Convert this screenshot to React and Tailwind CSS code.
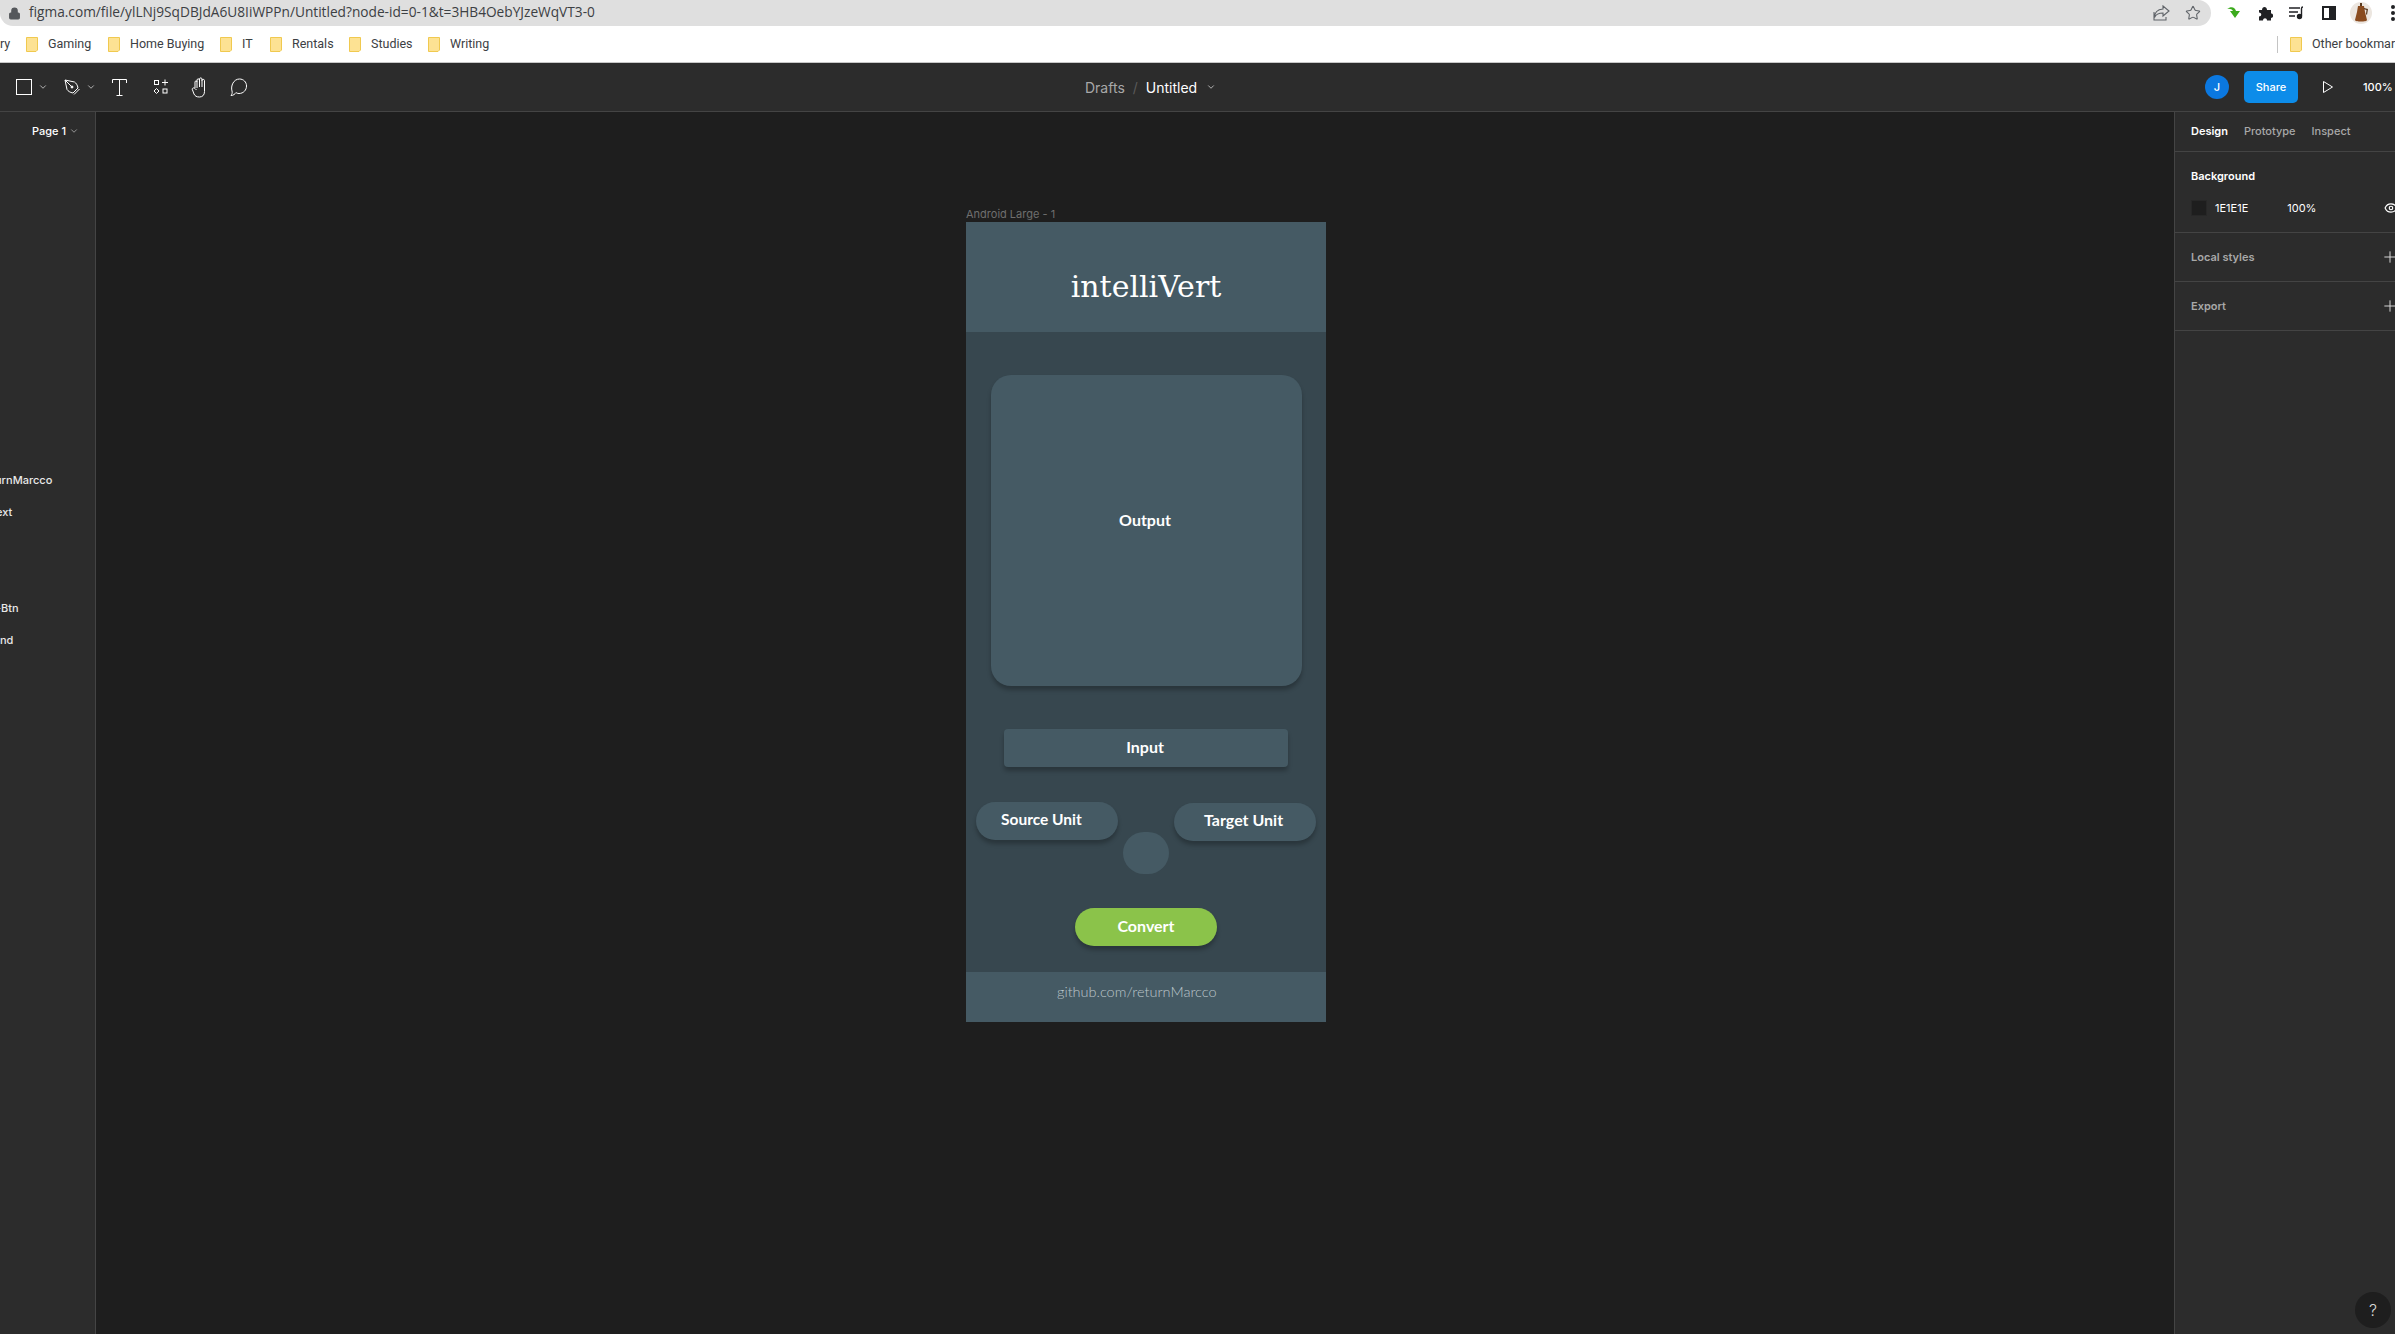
import React from "react";
import { ChevronDown, Eye, Lock, Plus, Star } from "lucide-react";

const bookmarks = [
  ["Gaming", 26],
  ["Home Buying", 108],
  ["IT", 220],
  ["Rentals", 270],
  ["Studies", 349],
  ["Writing", 428],
];

function Folder() {
  return (
    <svg width="12" height="15" viewBox="0 0 12 15" className="shrink-0">
      <path d="M.5.5h11v12.5l-1.500 1.500H.5z" fill="#fde293" stroke="#f0c94f" />
    </svg>
  );
}

function Dot() {
  return <div className="w-[4px] h-[4px] rounded-full bg-[#202124]" />;
}

function BrowserBar() {
  return (
    <div className="h-[63px] bg-white border-b border-[#c8c8c8]">
      <div className="h-[26px] flex items-center">
        <div className="w-[2211px] shrink-0 h-[26px] bg-[#dfdfdf] rounded-r-[13px] rounded-bl-[13px] flex items-center pl-[8px] pr-[10px]">
          <Lock size={13} className="text-[#55585c] mr-[8px]" fill="#55585c" />
          <span className="text-[13.700px] leading-[24px] -mt-[2px] text-[#3c4043] font-['Open_Sans',sans-serif] whitespace-nowrap">figma.com/file/ylLNj9SqDBJdA6U8IiWPPn/Untitled?node-id=0-1&t=3HB4OebYJzeWqVT3-0</span>
          <svg width="17" height="16" viewBox="0 0 17 16" fill="none" stroke="#5f6368" strokeWidth="1.100" className="ml-auto mr-[15px]">
            <path d="M1 7v8h12v-3M10 1l6 5-6 5V8C6 8 3 9 1.500 12.500 1.500 8 4 4.500 10 4z" />
          </svg>
          <Star size={16} className="text-[#5f6368]" strokeWidth={1.600} />
        </div>
        <div className="flex-1 flex items-center">
          <svg width="14" height="14" viewBox="0 0 14 14" className="ml-[16px]">
            <path d="M0 3c4-3 8-2 9 2h4l-5 7-5-7h3C5 3.500 3 2.500 0 3z" fill="#3cab1e" />
          </svg>
          <svg width="15" height="15" viewBox="0 0 15 15" className="ml-[17px]">
            <path d="M1 4h3c0-4 5-4 5 0h4v3.500c3 0 3 4.500 0 4.500v2.500H9c0-3-4-3-4 0H1v-4c3 0 3-4 0-4z" fill="#202124" />
          </svg>
          <svg width="16" height="14" viewBox="0 0 16 14" fill="none" stroke="#202124" strokeWidth="1.400" className="ml-[16px]">
            <path d="M0 2h11M0 6h9M0 10h6M14 1c-1 0-1.500.5-1.500 1.500V10" />
            <circle cx="10.500" cy="10.500" r="2" fill="#202124" />
          </svg>
          <div className="ml-[17px] w-[14px] h-[14px] border-[2px] border-[#202124] border-r-[7px]" />
          <svg width="22" height="22" viewBox="0 0 22 22" className="ml-[14px]">
            <circle cx="11" cy="11" r="11" fill="#ece6e0" />
            <path d="M8 4h6l1 6 2 8c0 2-12 2-12 0l2-8z" fill="#8a4b1f" />
            <path d="M10 1h2v3h-2zM14 6l4 1-1 6-1-1 .5-4-3-1z" fill="#5a3a20" />
          </svg>
          <div className="ml-[19px] flex flex-col gap-[2px]">
            <Dot />
            <Dot />
            <Dot />
          </div>
        </div>
      </div>
      <div className="h-[36px] flex items-center text-[12.500px] text-[#3c4043] font-['Roboto',sans-serif] relative overflow-hidden">
        <span className="absolute left-0">ry</span>
        {bookmarks.map(([name, x]) => (
          <div key={name} className="absolute flex items-center gap-[10px]" style={{ left: x }}>
            <Folder />
            <span className="whitespace-nowrap">{name}</span>
          </div>
        ))}
        <div className="absolute left-[2277px] h-[17px] w-px bg-[#c4c4c4]" />
        <div className="absolute left-[2290px] flex items-center gap-[10px]">
          <Folder />
          <span className="whitespace-nowrap">Other bookmarks</span>
        </div>
      </div>
    </div>
  );
}

function ToolBar() {
  return (
    <div className="h-[49px] bg-[#2c2c2c] border-b border-[#444444] flex items-center relative font-['Inter',sans-serif]">
      <div className="flex items-center text-white">
        <div className="ml-[16px] w-[16px] h-[16px] border border-white" />
        <ChevronDown size={10} strokeWidth={1.500} className="ml-[6px]" />
        <svg width="17" height="17" viewBox="0 0 17 17" fill="none" stroke="white" className="ml-[16px]">
          <path d="M1 1l9.500 2c1.500 1 3 3 3.500 6L9 14c-3-.5-5-2-6-3.500zM1 1l6.500 6.500M10 15.500l5.500-5.500" />
          <circle cx="8" cy="8" r="1" fill="white" />
        </svg>
        <ChevronDown size={10} strokeWidth={1.500} className="ml-[5px]" />
        <svg width="15" height="17" viewBox="0 0 15 17" fill="none" stroke="white" className="ml-[16px]">
          <path d="M.5 4V.5h14V4M7.500.5v16M4.500 16.500h6" />
        </svg>
        <svg width="16" height="16" viewBox="0 0 16 16" fill="none" stroke="white" className="ml-[26px]">
          <rect x="1.500" y="1.500" width="4" height="4" />
          <path d="M12 .5v6M9 3.500h6" />
          <path d="M3.500 9.500l2.500 2.500-2.500 2.500L1 12z" />
          <rect x="10" y="10" width="4" height="4" />
        </svg>
        <svg width="18" height="21" viewBox="0 0 18 21" fill="none" stroke="white" className="ml-[22px]">
          <path d="M4 11V5c0-1.500 2-1.500 2 0V3c0-1.500 2.500-1.500 2.500 0V2c0-1.500 2.500-1.500 2.500 0v1.500c0-1.500 2.500-1.500 2.500 0v11c0 3.500-2 5.500-5 5.500-3 0-4.500-1-5.500-3L1.500 13c-1-1.500 1-3 2.500-1.500l1.500 1.500M6 5v6M8.500 3v7M11 2.500V10" />
        </svg>
        <svg width="18" height="20" viewBox="0 0 18 20" fill="none" stroke="white" className="ml-[21px]">
          <path d="M1 18.500c1-1.500 1.500-2.500 1-4.500C.5 9 3.500 2 9.500 2c4 0 7 3 7 7s-3 7.500-7.500 7.500c-1.500 0-2.500-.5-3-1-1 1.500-2.500 3-5 3z" />
        </svg>
      </div>
      <div className="absolute left-[1085px] flex items-center text-[14px]">
        <span className="text-[#a8a8a8]">Drafts</span>
        <span className="text-[#5a5a5a] mx-[8px]">/</span>
        <span className="text-white">Untitled</span>
        <ChevronDown size={10} strokeWidth={1.500} className="text-white ml-[9px]" />
      </div>
      <div className="ml-auto flex items-center text-white">
        <div className="w-[24px] h-[24px] rounded-full bg-[#0b78e0] flex items-center justify-center text-[11px] font-medium">J</div>
        <div className="ml-[15px] w-[54px] h-[32px] rounded-[5px] bg-[#0d8ce9] flex items-center justify-center text-[11px] font-medium">Share</div>
        <svg width="12" height="14" viewBox="0 0 12 14" fill="none" stroke="white" className="ml-[24px]">
          <path d="M1.500 1.500L10.500 7l-9 5.500z" />
        </svg>
        <span className="ml-[29px] w-[32px] text-[11px] font-medium">100%</span>
      </div>
    </div>
  );
}

function LayerPanel() {
  return (
    <div className="w-[96px] shrink-0 bg-[#2c2c2c] border-r border-[#444444] text-[11px] font-medium text-[#e8e8e8] font-['Inter',sans-serif] flex flex-col overflow-hidden">
      <div className="h-[38px] pl-[32px] flex items-center text-white">
        Page 1
        <ChevronDown size={10} className="text-[#a8a8a8] ml-[3px]" />
      </div>
      <div className="mt-[314px] flex flex-col">
        <span className="h-[32px] leading-[32px] -ml-[5px]">urnMarcco</span>
        <span className="h-[32px] leading-[32px] -ml-[4px]">ext</span>
        <span className="h-[64px]" />
        <span className="h-[32px] leading-[32px] -ml-[4px]">-Btn</span>
        <span className="h-[32px] leading-[32px]">nd</span>
      </div>
    </div>
  );
}

function Frame() {
  return (
    <div className="w-[360px] h-[800px] bg-[#37474f] flex flex-col font-['Lato',sans-serif] text-white">
      <div className="h-[110px] bg-[#455a64] flex items-center justify-center pt-[19px]">
        <h1 className="text-[30px] font-['DejaVu_Serif',serif] font-normal">intelliVert</h1>
      </div>
      <div className="flex-1 flex flex-col">
        <div className="mt-[43px] ml-[25px] w-[311px] h-[311px] rounded-[20px] bg-[#455a64] shadow-[0_4px_4px_rgba(0,0,0,0.25)] flex items-center justify-center text-[16px] font-bold">
          <span className="-mt-[22px] -ml-[3px]">Output</span>
        </div>
        <div className="mt-[43px] ml-[38px] w-[284px] h-[38px] rounded-[4px] bg-[#455a64] shadow-[0_4px_4px_rgba(0,0,0,0.25)] flex items-center justify-center text-[16px] font-bold">
          <span className="-mt-[3px] -ml-[2px]">Input</span>
        </div>
        <div className="mt-[35px] ml-[10px] flex items-start">
          <div className="w-[142px] h-[38px] rounded-full bg-[#455a64] shadow-[0_4px_4px_rgba(0,0,0,0.25)] flex items-center pl-[25px] text-[15.500px] font-bold">
            <span className="-mt-[3px]">Source Unit</span>
          </div>
          <div className="ml-[5px] mt-[30px] w-[46px] h-[42px] rounded-full bg-[#455a64]" />
          <div className="ml-[5px] mt-[1px] w-[142px] h-[38px] rounded-full bg-[#455a64] shadow-[0_4px_4px_rgba(0,0,0,0.25)] flex items-center pl-[30px] text-[16px] font-bold">
            <span className="-mt-[4px]">Target Unit</span>
          </div>
        </div>
        <div className="mt-[34px] ml-[109px] w-[142px] h-[38px] rounded-full bg-[#8bc34a] shadow-[0_4px_4px_rgba(0,0,0,0.25)] flex items-center justify-center text-[16px] font-bold">
          <span className="-mt-[3px]">Convert</span>
        </div>
      </div>
      <div className="h-[50px] bg-[#455a64] pl-[91px] pt-[9px] text-[14.500px] font-light text-[#bcc6cb]">github.com/returnMarcco</div>
    </div>
  );
}

function Canvas() {
  return (
    <div className="flex-1 bg-[#1e1e1e] pl-[870px] pt-[95px] font-['Inter',sans-serif]">
      <div className="h-[15px] leading-[14px] text-[11px] text-[#6f6f6f]">Android Large - 1</div>
      <Frame />
    </div>
  );
}

function SidePanel() {
  return (
    <div className="w-[221px] shrink-0 bg-[#2c2c2c] border-l border-[#444444] text-[11px] font-['Inter',sans-serif] text-white overflow-hidden flex flex-col">
      <div className="h-[40px] border-b border-[#444444] pl-[16px] flex items-center gap-[16px] font-medium">
        <span className="font-semibold">Design</span>
        <span className="text-[#a8a8a8]">Prototype</span>
        <span className="text-[#a8a8a8]">Inspect</span>
      </div>
      <div className="h-[81px] border-b border-[#444444] pl-[16px] pt-[16px]">
        <div className="font-semibold leading-[16px]">Background</div>
        <div className="mt-[16px] flex items-center h-[16px] relative">
          <div className="w-[16px] h-[16px] bg-[#1e1e1e] border border-[#272727]" />
          <span className="ml-[8px]">1E1E1E</span>
          <span className="ml-[39px]">100%</span>
          <Eye size={14} className="absolute left-[193px]" />
        </div>
      </div>
      <div className="h-[49px] border-b border-[#444444] pl-[16px] flex items-center font-semibold text-[#a8a8a8] relative">
        Local styles
        <Plus size={18} strokeWidth={1.300} className="absolute left-[206px] text-[#d8d8d8]" />
      </div>
      <div className="h-[49px] border-b border-[#444444] pl-[16px] flex items-center font-semibold text-[#a8a8a8] relative">
        Export
        <Plus size={18} strokeWidth={1.300} className="absolute left-[206px] text-[#d8d8d8]" />
      </div>
      <div className="flex-1 flex items-end justify-end pr-[4px] pb-[6px]">
        <div className="w-[36px] h-[36px] rounded-full bg-[#1e1e1e] flex items-center justify-center text-[16px] text-[#d8d8d8] font-light">?</div>
      </div>
    </div>
  );
}

export default function App() {
  return (
    <div className="w-[2395px] h-[1334px] overflow-hidden flex flex-col bg-[#1e1e1e]">
      <BrowserBar />
      <ToolBar />
      <div className="flex-1 flex min-h-0">
        <LayerPanel />
        <Canvas />
        <SidePanel />
      </div>
    </div>
  );
}
